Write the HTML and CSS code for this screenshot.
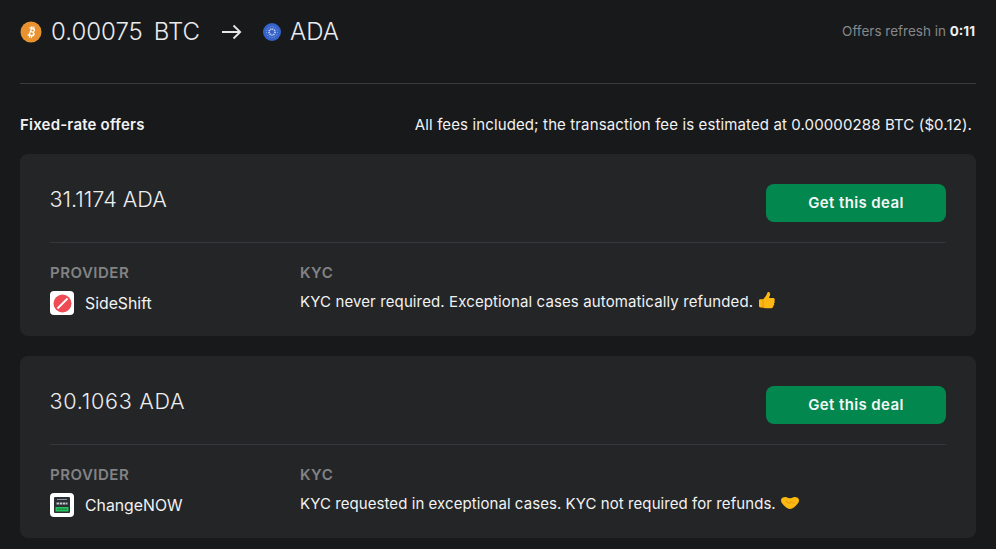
FILE: index.html
```html
<!DOCTYPE html>
<html lang="en">
<head>
<meta charset="utf-8">
<title>Offers</title>
<link rel="stylesheet" href="styles.css">
</head>
<body>
<header class="top">
  <div class="pair">
    <svg class="coin" viewBox="0 0 22 22"><circle cx="11" cy="11" r="10.5" fill="#e8932f"/><g transform="rotate(12 11 11)"><path d="M8.2 6.5h4c1.6 0 2.4.9 2.4 2.1 0 .9-.5 1.600-1.300 1.900 1.100.2 1.800 1.100 1.800 2.200 0 1.500-1 2.400-2.700 2.400H8.200l.3-1.400h.8l.8-5.800h-.9zM11.300 8.100l-.3 2h1.300c.7 0 1.100-.4 1.100-1s-.4-1-1-1zM10.800 11.400l-.3 2.300h1.600c.8 0 1.200-.5 1.200-1.200s-.5-1.100-1.200-1.100zM10.300 5h1v1.700h-1zM12.300 5h1v1.700h-1zM10 15h1v2h-1zM12 15h1v2h-1z" fill="#fff"/></g></svg>
    <span class="amount">0.00075</span>
    <span class="sym">BTC</span>
    <svg class="arrow" viewBox="0 0 20 16"><path d="M0 8h18M11.500 1.500 18.200 8l-6.700 6.500" fill="none" stroke="#e6e7e9" stroke-width="1.800"/></svg>
    <svg class="coin ada" viewBox="0 0 18 18"><circle cx="9" cy="9" r="9" fill="#3563c9"/><circle cx="9" cy="9" r="3" fill="none" stroke="#cfdcf7" stroke-width="1.600" stroke-dasharray="1.200 .8"/><circle cx="9" cy="9" r="5.500" fill="none" stroke="#8eaaea" stroke-width="1" stroke-dasharray="1 1.600"/></svg>
    <span class="sym">ADA</span>
  </div>
  <p class="refresh">Offers refresh in <b>0:11</b></p>
</header>
<div class="intro">
  <h2>Fixed-rate offers</h2>
  <p>All fees included; the transaction fee is estimated at 0.00000288 BTC ($0.12).</p>
</div>
<section class="card">
  <div class="card-top">
    <div class="quote">31.1174 ADA</div>
    <button class="deal">Get this deal</button>
  </div>
  <div class="details">
    <div class="col-provider">
      <div class="label">PROVIDER</div>
      <div class="provider">
        <span class="logo"><svg viewBox="0 0 24 24" width="24" height="24"><rect width="24" height="24" rx="4" fill="#fff"/><circle cx="12.500" cy="12.500" r="9" fill="#ee4b55"/><path d="M7.500 17.500 17.500 7.500" stroke="#fff" stroke-width="1.800"/></svg></span>
        <span>SideShift</span>
      </div>
    </div>
    <div class="col-kyc">
      <div class="label">KYC</div>
      <div class="kyc-text">KYC never required. Exceptional cases automatically refunded.
        <svg class="emoji" viewBox="0 0 20 20"><path d="M2 9.500c0-.8.600-1.300 1.300-1.300h2.900c1.200-1.500 3.200-3.300 3.700-5.100.3-1.300.7-2.300 1.800-2.100 1.400.3 1.700 2 1.200 3.500-.3.900-.7 1.700-.9 2.600h3.900c1.100 0 1.900.7 1.900 1.700 0 .6-.2 1-.6 1.300.5.400.7.900.5 1.500-.1.500-.4.800-.8 1 .3.400.4.900.2 1.400-.2.500-.5.800-1 .9.200.4.200.8 0 1.200-.3.700-1 1.100-1.800 1.100H9c-1.300 0-2-.8-3-.8H3.300c-.7 0-1.300-.6-1.300-1.300z" fill="#fbb811"/><path d="M6 8.500v8.800" stroke="#e58e0a" stroke-width=".8" fill="none"/></svg>
      </div>
    </div>
  </div>
</section>
<section class="card">
  <div class="card-top">
    <div class="quote quote-wide">30.1063 ADA</div>
    <button class="deal">Get this deal</button>
  </div>
  <div class="details">
    <div class="col-provider">
      <div class="label">PROVIDER</div>
      <div class="provider">
        <span class="logo"><svg viewBox="0 0 24 24" width="24" height="24"><rect width="24" height="24" rx="4" fill="#fff"/><rect x="4" y="4" width="16" height="16" rx="1" fill="#2a2e35"/><path d="M7 6.500h10" stroke="#8f949b" stroke-width="1"/><path d="M6.500 10.500h11" stroke="#c4c8cc" stroke-width="2" stroke-dasharray="2.600 .6"/><rect x="5.500" y="14" width="13" height="4.500" fill="#26c25d"/><path d="M7 16.200h10" stroke="#1a7a3c" stroke-width="1"/></svg></span>
        <span>ChangeNOW</span>
      </div>
    </div>
    <div class="col-kyc">
      <div class="label">KYC</div>
      <div class="kyc-text kyc-tight">KYC requested in exceptional cases. KYC not required for refunds.
        <svg class="emoji" viewBox="0 0 20 20"><path d="M1 6.500c1.500-2.500 4-2.800 6-2 1 .4 2 .7 3 .7s2-.3 3-.7c2-.8 4.500-.5 6 2 .2 2.500-1 4-2.500 5.500-1.500 1.500-3.500 3.500-6.500 4-3-.5-5-2.500-6.500-4C2 10.500.8 9 1 6.500z" fill="#fbb811"/><path d="M6 8l3 2.500 3-2 2.500 2.500" stroke="#e58e0a" stroke-width=".9" fill="none"/></svg>
      </div>
    </div>
  </div>
</section>
</body>
</html>
```
FILE: styles.css
```css
* { box-sizing: border-box; }
html, body { margin: 0; height: 549px; overflow: hidden; }
body {
  background: #18191b;
  color: #f1f2f3;
  font-family: Inter, "Liberation Sans", sans-serif;
  padding: 0 20px;
  font-size: 15px;
}
.top {
  height: 84px;
  padding-bottom: 20px;
  border-bottom: 1px solid #3a3b3d;
  display: flex;
  justify-content: space-between;
  align-items: center;
}
.pair { display: flex; align-items: center; font-size: 24px; line-height: 28px; color: #e9ebee; font-weight: 300; }
.coin { width: 22px; height: 22px; margin-right: 9px; display: block; }
.coin.ada { width: 18px; height: 18px; margin-right: 9px; }
.amount { margin-right: 11px; }
.arrow { width: 20px; height: 16px; margin: 0 21px 0 22px; display: block; }
.refresh { margin: 0 1px 2px 0; font-size: 13.5px; color: #85878a; }
.refresh b { color: #eceef0; font-weight: 700; }
.intro {
  height: 70px;
  padding: 10px 4px 0 0;
  display: flex;
  justify-content: space-between;
  align-items: center;
}
.intro h2 { margin: 0; font-size: 15px; font-weight: 600; letter-spacing: .2px; }
.intro p { margin: 0; font-size: 15px; letter-spacing: .12px; }
.card {
  background: #242527;
  border-radius: 8px;
  height: 182px;
  padding: 30px;
  margin-bottom: 20px;
}
.card-top {
  display: flex;
  justify-content: space-between;
  height: 59px;
  border-bottom: 1px solid #36373a;
}
.quote { font-size: 21.6px; line-height: 30px; font-weight: 300; color: #eceef0; margin-left: -.5px; }
.quote-wide { letter-spacing: .7px; }
.deal {
  width: 180px;
  height: 38px;
  border: 0;
  border-radius: 8px;
  padding: 0 0 2px;
  background: #02874f;
  color: #f4f6f5;
  font: 600 15px Inter, "Liberation Sans", sans-serif;
  letter-spacing: .4px;
}
.details { display: flex; padding-top: 20px; }
.col-provider { width: 250px; }
.label { font-size: 15px; line-height: 20px; font-weight: 600; color: #828385; letter-spacing: .5px; }
.provider { display: flex; align-items: center; gap: 11px; margin-top: 8px; font-size: 15.8px; }
.logo { width: 24px; height: 24px; display: block; }
.logo svg { display: block; }
.kyc-text { margin-top: 8px; font-size: 15px; line-height: 22px; letter-spacing: .12px; }
.kyc-tight { letter-spacing: .07px; }
.emoji { width: 20px; height: 20px; vertical-align: -4px; margin-left: 0; }
```
